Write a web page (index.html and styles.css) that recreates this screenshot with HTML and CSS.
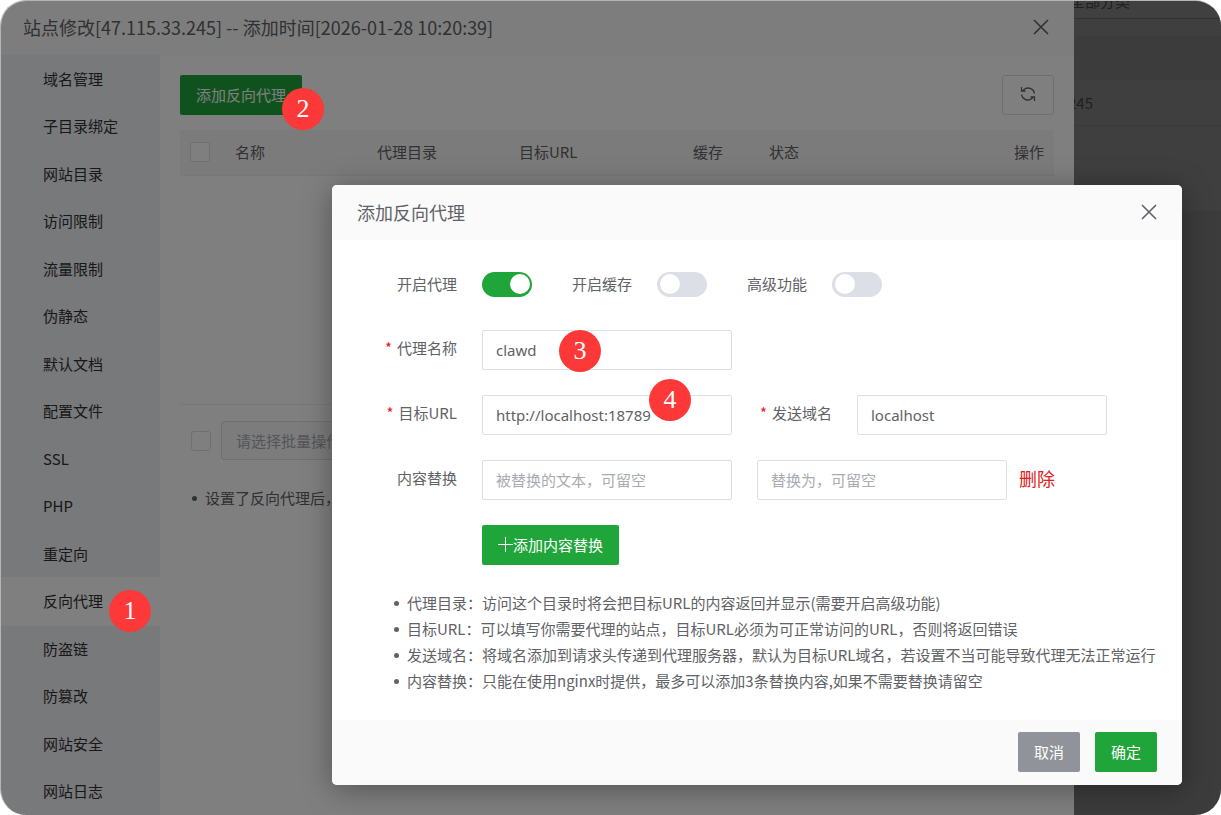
FILE: index.html
```html
<!DOCTYPE html>
<html lang="zh-CN">

<head>
    <meta charset="UTF-8">
    <meta name="viewport" content="width=device-width, initial-scale=1.0">
    <title>站点修改</title>
    <link rel="stylesheet" href="styles.css">
</head>

<body>
    <div class="frame">
        <section class="site">
            <header class="site-header">
                <h1>站点修改[47.115.33.245] -- 添加时间[2026-01-28 10:20:39]</h1>
                <button type="button" class="close" aria-label="关闭">
                    <svg width="16" height="16" viewBox="0 0 16 16"><path d="M1 1L15 15M15 1L1 15" /></svg>
                </button>
            </header>

            <div class="site-body">
                <nav class="menu">
                    <a href="#">域名管理</a>
                    <a href="#">子目录绑定</a>
                    <a href="#">网站目录</a>
                    <a href="#">访问限制</a>
                    <a href="#">流量限制</a>
                    <a href="#">伪静态</a>
                    <a href="#">默认文档</a>
                    <a href="#">配置文件</a>
                    <a href="#">SSL</a>
                    <a href="#">PHP</a>
                    <a href="#">重定向</a>
                    <a href="#" class="active">反向代理</a>
                    <a href="#">防盗链</a>
                    <a href="#">防篡改</a>
                    <a href="#">网站安全</a>
                    <a href="#">网站日志</a>
                </nav>

                <main class="content">
                    <div class="toolbar">
                        <button type="button" class="btn btn-green">添加反向代理</button>
                        <button type="button" class="refresh" aria-label="刷新">
                            <svg width="16" height="16" viewBox="0 0 16 16">
                                <path d="M1.500 1V5H5.500M1.500 5H3L4 3.500A6.500 6.500 0 0 1 14.500 7.500" />
                                <path d="M14.500 15V11H10.500M14.500 11H13L12 12.500A6.500 6.500 0 0 1 1.500 8.500" />
                            </svg>
                        </button>
                    </div>

                    <div class="table-box">
                        <table>
                            <thead>
                                <tr>
                                    <th class="col-check"><input type="checkbox" class="check" aria-label="全选"></th>
                                    <th class="col-name">名称</th>
                                    <th class="col-name">代理目录</th>
                                    <th class="col-url">目标URL</th>
                                    <th class="col-cache">缓存</th>
                                    <th>状态</th>
                                    <th class="col-action">操作</th>
                                </tr>
                            </thead>
                        </table>
                    </div>

                    <div class="batch">
                        <input type="checkbox" class="check" aria-label="选择全部">
                        <select aria-label="批量操作" disabled>
                            <option>请选择批量操作</option>
                        </select>
                    </div>

                    <ul class="tips">
                        <li>设置了反向代理后，</li>
                    </ul>
                </main>
            </div>
        </section>

        <aside class="behind">
            <div class="behind-top">全部分类</div>
            <div class="behind-gap"></div>
            <div class="behind-head"></div>
            <div class="behind-row">245</div>
            <div class="behind-list"></div>
        </aside>

        <div class="overlay"></div>

        <section class="dialog" role="dialog" aria-labelledby="dialogTitle">
            <header class="dialog-header">
                <h2 id="dialogTitle">添加反向代理</h2>
                <button type="button" class="close" aria-label="关闭">
                    <svg width="16" height="16" viewBox="0 0 16 16"><path d="M1 1L15 15M15 1L1 15" /></svg>
                </button>
            </header>

            <form class="dialog-form" id="proxyForm">
                <div class="row switches">
                    <label class="label" for="proxyOn">开启代理</label>
                    <input type="checkbox" class="switch" id="proxyOn" checked>
                    <label for="cacheOn">开启缓存</label>
                    <input type="checkbox" class="switch" id="cacheOn">
                    <label for="advanced">高级功能</label>
                    <input type="checkbox" class="switch" id="advanced">
                </div>
                <div class="row">
                    <label class="label required" for="proxyName">代理名称</label>
                    <input type="text" class="text" id="proxyName" value="clawd">
                </div>
                <div class="row">
                    <label class="label required" for="targetUrl">目标URL</label>
                    <input type="text" class="text" id="targetUrl" value="http://localhost:18789">
                    <label class="label-mid required" for="sendHost">发送域名</label>
                    <input type="text" class="text" id="sendHost" value="localhost">
                </div>
                <div class="row">
                    <label class="label" for="replaceFrom">内容替换</label>
                    <input type="text" class="text" id="replaceFrom" placeholder="被替换的文本，可留空">
                    <input type="text" class="text" aria-label="替换为" placeholder="替换为，可留空">
                    <a href="#" class="delete">删除</a>
                </div>
                <div class="row">
                    <span class="label"></span>
                    <button type="button" class="btn btn-green btn-add">
                        <svg width="15" height="15" viewBox="0 0 15 15"><path d="M7.500 0V15M0 7.500H15" /></svg>添加内容替换
                    </button>
                </div>
            </form>

            <ul class="tips dialog-tips">
                <li>代理目录：访问这个目录时将会把目标URL的内容返回并显示(需要开启高级功能)</li>
                <li>目标URL：可以填写你需要代理的站点，目标URL必须为可正常访问的URL，否则将返回错误</li>
                <li>发送域名：将域名添加到请求头传递到代理服务器，默认为目标URL域名，若设置不当可能导致代理无法正常运行</li>
                <li>内容替换：只能在使用nginx时提供，最多可以添加3条替换内容,如果不需要替换请留空</li>
            </ul>

            <footer class="dialog-footer">
                <button type="button" class="btn btn-gray">取消</button>
                <button type="submit" form="proxyForm" class="btn btn-green">确定</button>
            </footer>
        </section>

        <span class="step step-1">1</span>
        <span class="step step-2">2</span>
        <span class="step step-3">3</span>
        <span class="step step-4">4</span>
    </div>
</body>

</html>
```
FILE: styles.css
```css
* {
    box-sizing: border-box;
}

body {
    margin: 0;
    background: #fff;
    color: #606266;
    font-family: "Noto Sans CJK SC", sans-serif;
    font-size: 15px;
}

h1, h2 {
    margin: 0;
    font-size: 18px;
    font-weight: normal;
}

button, input, select {
    font: inherit;
    margin: 0;
}

a {
    text-decoration: none;
}

svg {
    fill: none;
    stroke: currentColor;
}

.frame {
    position: relative;
    display: grid;
    grid-template-columns: minmax(0, 1fr) 147px;
    min-height: 100vh;
    border-top: 1px solid #b4b6b4;
    border-left: 1px solid #b4b6b4;
    border-radius: 26px;
    overflow: hidden;
    background: #787878;
}

/* site window */
.site {
    display: flex;
    flex-direction: column;
    background: #fff;
    border-top-right-radius: 5px;
}

.site-header {
    display: flex;
    justify-content: space-between;
    align-items: center;
    height: 54px;
    padding: 0 25px 2px 22px;
    background: #fafafa;
}

.close {
    display: flex;
    padding: 0;
    border: none;
    background: none;
    color: #606266;
    cursor: pointer;
}

.close path {
    stroke-width: 1.6;
}

.site-body {
    display: flex;
    flex: 1;
}

.menu {
    display: grid;
    grid-auto-rows: 1fr;
    width: 159px;
    background: #f0f2f5;
}

.menu a {
    display: flex;
    align-items: center;
    padding: 0 0 1px 42px;
    color: #303133;
}

.menu .active {
    margin: -1px 0;
    background: #fff;
}

.content {
    flex: 1;
    min-width: 0;
    padding: 20px;
}

.toolbar {
    display: flex;
    justify-content: space-between;
    margin-bottom: 15px;
}

.btn {
    height: 40px;
    padding: 0 16px 2px;
    border: none;
    border-radius: 2px;
    color: #fff;
    cursor: pointer;
}

.btn-green {
    background: #20a53a;
}

.btn-gray {
    background: #909399;
}

.refresh {
    width: 52px;
    height: 40px;
    padding: 0;
    border: 1px solid #dcdfe6;
    border-radius: 3px;
    background: #fff;
    color: #606266;
}

.refresh path {
    stroke-width: 1.3;
}

.table-box {
    height: 275px;
    border-bottom: 1px solid #ebeef5;
}

table {
    width: 100%;
    border-collapse: collapse;
    table-layout: fixed;
}

th {
    height: 45px;
    padding: 0 10px 1px;
    border-bottom: 1px solid #ebeef5;
    background: #f6f6f6;
    font-weight: normal;
    text-align: left;
}

.col-check {
    width: 45px;
}

.col-name {
    width: 142px;
}

.col-url {
    width: 174px;
}

.col-cache {
    width: 76px;
}

.col-action {
    text-align: right;
}

.check {
    appearance: none;
    display: block;
    width: 20px;
    height: 20px;
    border: 1px solid #dcdfe6;
    border-radius: 3px;
    background: #fff;
}

.batch {
    display: flex;
    align-items: center;
    gap: 10px;
    margin-top: 16px;
    padding-left: 11px;
}

.batch select {
    appearance: none;
    width: 200px;
    height: 39px;
    padding: 0 14px;
    border: 1px solid #dcdfe6;
    border-radius: 3px;
    background: #f8f8f8;
    color: #a8abb2;
    opacity: 1;
}

.tips {
    margin: 25px 0 0;
    padding-left: 25px;
    line-height: 26px;
    list-style: none;
    white-space: nowrap;
}

.tips li {
    display: flex;
    align-items: center;
}

.tips li::before {
    content: "";
    width: 5px;
    height: 5px;
    margin-left: -13px;
    margin-right: 8px;
    border-radius: 50%;
    background: currentColor;
}

/* page left behind the window */
.behind {
    display: flex;
    flex-direction: column;
    color: #404040;
    overflow: hidden;
}

.behind-top {
    height: 18px;
    margin-left: -4px;
    border-bottom: 1px solid #606260;
    background: #7f807f;
    line-height: 0;
}

.behind-gap {
    height: 17px;
    background: #7c7e7c;
}

.behind-head {
    height: 43px;
    background: #7a7878;
}

.behind-row {
    height: 47px;
    margin-left: -6px;
    border-top: 1px solid #747474;
    border-bottom: 1px solid #747474;
    background: #7c7e7c;
    line-height: 45px;
}

.behind-list {
    height: 85px;
    background: #7c7e7c;
}

.overlay {
    position: absolute;
    inset: 0;
    background: rgba(0, 0, 0, 0.5);
}

/* add proxy dialog */
.dialog {
    position: absolute;
    top: 184px;
    left: 331px;
    right: 39px;
    border-radius: 5px;
    background: #fff;
    box-shadow: 0 4px 30px rgba(0, 0, 0, 0.35);
    overflow: hidden;
}

.dialog-header {
    display: flex;
    justify-content: space-between;
    align-items: center;
    height: 55px;
    padding: 0 25px 2px;
    background: #fafafa;
}

.dialog-form {
    display: flex;
    flex-direction: column;
    gap: 25px;
    padding-top: 25px;
}

.row {
    display: flex;
    align-items: center;
    gap: 25px;
    height: 40px;
}

.row label {
    padding-bottom: 5px;
}

.label {
    width: 125px;
    text-align: right;
}

.label-mid {
    width: 75px;
    text-align: right;
}

.required::before {
    content: "*";
    margin-right: 5px;
    color: #e02020;
}

.switches {
    padding-bottom: 2px;
}

.switches label {
    padding-bottom: 1px;
}

.switches .switch + label {
    margin-left: 15px;
}

.switch {
    appearance: none;
    display: flex;
    align-items: center;
    width: 50px;
    height: 25px;
    padding: 0 3px;
    border-radius: 13px;
    background: #dcdfe6;
}

.switch::before {
    content: "";
    width: 20px;
    height: 20px;
    border-radius: 50%;
    background: #fff;
}

.switch:checked {
    justify-content: flex-end;
    padding: 0 2px;
    background: #20a53a;
}

.text {
    width: 250px;
    height: 40px;
    padding: 0 13px;
    border: 1px solid #dcdfe6;
    border-radius: 2px;
    background: #fff;
    color: #606266;
    font-family: "Noto Sans", "Noto Sans CJK SC", sans-serif;
}

.text::placeholder {
    color: #a8abb2;
}

.delete {
    margin-left: -13px;
    padding-bottom: 4px;
    color: #e02020;
    font-size: 18px;
}

.btn-add {
    display: flex;
    align-items: center;
}

.dialog-tips {
    padding-left: 75px;
}

.dialog-footer {
    display: flex;
    justify-content: flex-end;
    gap: 15px;
    margin-top: 26px;
    padding: 12px 25px 13px;
    background: #fafafa;
}

/* step markers */
.step {
    position: absolute;
    width: 42px;
    height: 42px;
    border-radius: 50%;
    background: #fc3838;
    color: #fff;
    font-family: "Liberation Serif", serif;
    font-size: 26px;
    line-height: 42px;
    text-align: center;
}

.step-1 {
    left: 108px;
    top: 589px;
}

.step-2 {
    left: 281px;
    top: 87px;
}

.step-3 {
    left: 558px;
    top: 329px;
}

.step-4 {
    left: 648px;
    top: 378px;
}
```
